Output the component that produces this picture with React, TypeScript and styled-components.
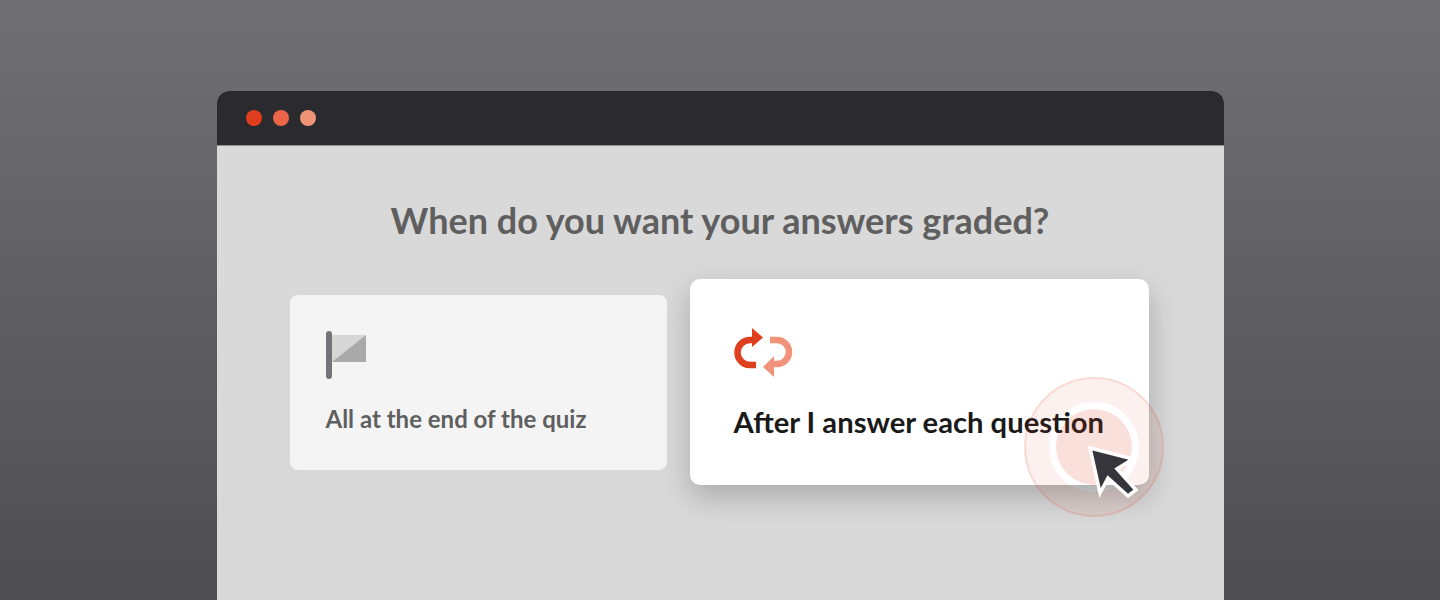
import styled, { createGlobalStyle } from "styled-components";

const GlobalStyle = createGlobalStyle`
  html, body {
    margin: 0;
    padding: 0;
  }
  body {
    font-family: "Lato", "Liberation Sans", sans-serif;
  }
`;

const Page = styled.div`
  width: 1440px;
  height: 600px;
  overflow: hidden;
  box-sizing: border-box;
  padding-top: 91px;
  display: flex;
  justify-content: center;
  background: linear-gradient(180deg, #706f73 0%, #4e4d52 100%);
`;

const BrowserWindow = styled.div`
  width: 1007px;
  height: 560px;
  flex-shrink: 0;
  display: flex;
  flex-direction: column;
  border-radius: 12px 12px 0 0;
  overflow: hidden;
  background: #d9d9d9;
`;

const TitleBar = styled.div`
  height: 55px;
  flex-shrink: 0;
  display: flex;
  align-items: center;
  gap: 11px;
  padding-left: 29px;
  background: #2b2a2f;
  border-bottom: 1px solid #8f8e90;
  box-sizing: border-box;
`;

const Dot = styled.span<{ $color: string }>`
  width: 16.3px;
  height: 16.3px;
  border-radius: 50%;
  background: ${(props) => props.$color};
`;

const Content = styled.div`
  display: flex;
  flex-direction: column;
  padding-top: 53px;
`;

const Title = styled.h1`
  margin: 0;
  font-size: 36px;
  line-height: 42px;
  font-weight: 700;
  text-align: center;
  color: #5f5f5f;
`;

const Options = styled.div`
  display: flex;
  align-items: center;
  gap: 23px;
  margin-top: 38px;
  padding-left: 73px;
`;

const Card = styled.div`
  position: relative;
  box-sizing: border-box;
  display: flex;
  flex-direction: column;
`;

const PlainCard = styled(Card)`
  width: 377px;
  height: 175px;
  padding: 36px 36px 0;
  border-radius: 8px;
  background: #f4f4f4;
`;

const RaisedCard = styled(Card)`
  width: 459px;
  height: 206px;
  padding: 49px 44px 0;
  border-radius: 10px;
  background: #ffffff;
  box-shadow: 0 12px 30px rgba(0, 0, 0, 0.22);
`;

const PlainLabel = styled.div`
  margin-top: 23px;
  font-size: 24px;
  line-height: 30px;
  font-weight: 700;
  color: #5f5f5f;
`;

const RaisedLabel = styled.div`
  margin-top: 26px;
  font-size: 29.2px;
  line-height: 36px;
  font-weight: 700;
  color: #1a1a1a;
`;

const CursorOverlay = styled.svg`
  position: absolute;
  left: 333px;
  top: 97px;
  width: 142px;
  height: 142px;
  overflow: visible;
`;

const FlagIcon = () => (
  <svg width="42" height="50" viewBox="0 0 42 50">
    <path d="M6 4H40V31H6Z" fill="#d6d6d6" />
    <path d="M40 4V31H6Z" fill="#a9a9a9" />
    <rect x="0" y="0" width="6" height="48" rx="3" fill="#747378" />
  </svg>
);

const RepeatIcon = () => (
  <svg width="60" height="50" viewBox="0 0 60 50" fill="none">
    <path d="M22 37H16A12.5 12.5 0 0 1 16 12H19" stroke="#df3f1f" strokeWidth="6.5" />
    <path d="M18 0L29 9.5L18 19Z" fill="#df3f1f" />
    <path d="M36 12H43A12 12 0 0 1 43 36H39" stroke="#f0937a" strokeWidth="6.5" />
    <path d="M40 28L29 39L40 49Z" fill="#f0937a" />
  </svg>
);

const ClickCursor = () => (
  <CursorOverlay viewBox="0 0 142 142">
    <circle cx="71" cy="71" r="57" fill="none" stroke="#df3f1f" strokeOpacity="0.07" strokeWidth="24" />
    <circle cx="71" cy="71" r="69" fill="none" stroke="#df3f1f" strokeOpacity="0.16" strokeWidth="2" />
    <circle cx="71" cy="71" r="38" fill="#df3f1f" fillOpacity="0.16" />
    <path
      d="M67 72L110 83L94 93L113 114L105 120L85 102L77 117Z"
      fill="#36353b"
      stroke="#ffffff"
      strokeWidth="3.5"
      strokeLinejoin="miter"
    />
  </CursorOverlay>
);

export default function App() {
  return (
    <>
      <GlobalStyle />
      <Page>
        <BrowserWindow>
          <TitleBar>
            <Dot $color="#df3f1f" />
            <Dot $color="#ec6549" />
            <Dot $color="#ef9478" />
          </TitleBar>
          <Content>
            <Title>When do you want your answers graded?</Title>
            <Options>
              <PlainCard>
                <FlagIcon />
                <PlainLabel>All at the end of the quiz</PlainLabel>
              </PlainCard>
              <RaisedCard>
                <RepeatIcon />
                <RaisedLabel>After I answer each question</RaisedLabel>
                <ClickCursor />
              </RaisedCard>
            </Options>
          </Content>
        </BrowserWindow>
      </Page>
    </>
  );
}
